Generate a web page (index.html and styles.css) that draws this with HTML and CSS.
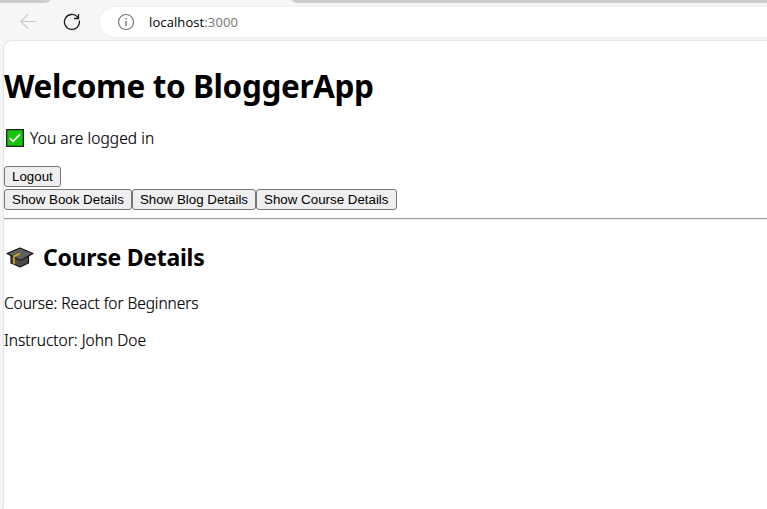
FILE: index.html
```html
<!DOCTYPE html>
<html lang="en">
<head>
<meta charset="utf-8">
<title>BloggerApp</title>
<link rel="stylesheet" href="styles.css">
</head>
<body>
<div class="tabs"><div class="tab tab-left"></div><div class="tab tab-right"></div></div>
<div class="toolbar">
  <svg class="back" width="18" height="16" viewBox="0 0 18 16" fill="none" stroke="#c8c8c8" stroke-width="1.1"><path d="M8 .500.500 7.500 8 14.500M.5 7.500h15.500"/></svg>
  <svg class="reload" width="18" height="18" viewBox="0 0 18 18" fill="none" stroke="#1b1b1b" stroke-width="1.3"><path d="M16.300 7.500A7.500 7.500 0 1 1 14.500 3.900L15.500 5M15.500 1v4.500H11"/></svg>
  <div class="address">
    <svg width="18" height="18" viewBox="0 0 18 18" fill="none" stroke="#777" stroke-width="1.200"><circle cx="9" cy="9" r="7.500"/><path d="M9 8v5M9 5v1.500" stroke-width="1.400"/></svg>
    <span class="url">localhost<span class="port">:3000</span></span>
  </div>
</div>
<main class="page">
  <h1>Welcome to BloggerApp</h1>
  <p class="status">
    <svg width="18" height="18" viewBox="0 0 18 18"><path fill="#16c60c" stroke="#222" stroke-width="1.300" d="M.65.65h16.700v16.700H.65z"/><path d="m4 9.300 3 3 7-7" fill="none" stroke="#fff" stroke-width="1.700"/></svg>
    <span>You are logged in</span>
  </p>
  <div class="row"><button>Logout</button></div>
  <div class="row details"><button>Show Book Details</button><button>Show Blog Details</button><button>Show Course Details</button></div>
  <hr>
  <h2>
    <svg width="28" height="21" viewBox="0 0 28 21" stroke="#151515" stroke-width="1.200" stroke-linejoin="round"><path fill="#4b4b4b" d="M5 8v8l9 4 8.500-4V8z"/><path fill="#606060" d="M1 6.500 14 1l13 5.500-12.500 7z"/><path d="m14 6.500-6 3v8" fill="none" stroke="#e3a21a" stroke-width="1.600"/></svg>
    <span>Course Details</span>
  </h2>
  <p class="course">Course: React for Beginners</p>
  <p class="teacher">Instructor: John Doe</p>
</main>
</body>
</html>
```

FILE: styles.css
```css
* { box-sizing: border-box; }
body {
  margin: 0;
  height: 509px;
  overflow: hidden;
  display: flex;
  flex-direction: column;
  background: #f6f6f6;
  color: #000;
  font-family: "Segoe UI", "Noto Sans", sans-serif;
}
svg { display: block; flex: none; }
.tabs { display: flex; justify-content: space-between; height: 3px; flex: none; }
.tab { background: #ccc; }
.tab-left { width: 50px; border-bottom-right-radius: 6px 3px; }
.tab-right { width: 475px; border-bottom-left-radius: 6px 3px; }
.toolbar { display: flex; align-items: center; height: 37px; flex: none; padding-left: 20px; }
.back { margin-right: 25px; }
.reload { margin-right: 19px; }
.address {
  flex: 1;
  display: flex;
  align-items: center;
  height: 30px;
  margin-top: 1px;
  padding-left: 17px;
  background: #fff;
  border-radius: 15px 0 0 15px;
  box-shadow: 0 0 2px rgba(0, 0, 0, .1);
}
.url { margin-left: 14px; font-family: "Segoe UI", "Open Sans", sans-serif; font-size: 13px; line-height: 18px; letter-spacing: .1px; white-space: nowrap; }
.port { color: #767676; }
.page {
  flex: 1;
  margin: 1px 0 0 4px;
  background: #fff;
  border-top-left-radius: 8px;
  box-shadow: 0 0 2px rgba(0, 0, 0, .25);
}
h1, h2, p { margin: 0; white-space: nowrap; }
h1 { padding-top: 23px; font-size: 31.500px; line-height: 43px; font-weight: 700; letter-spacing: -.38px; }
.status { display: flex; align-items: center; height: 21px; margin-top: 20px; padding-left: 2px; gap: 6px; letter-spacing: .1px; }
.status span { position: relative; top: 1px; }
p { font-size: 15.500px; line-height: 21px; font-weight: 300; -webkit-text-stroke: .2px #000; }
.row { display: flex; height: 21px; margin-top: 2px; }
.status + .row { margin-top: 18px; }
button {
  height: 21px;
  margin: 0;
  padding: 0 7px;
  border: 1px solid #767676;
  border-radius: 3px;
  background: #efefef;
  color: #000;
  font: 13.333px "Liberation Sans", Arial, sans-serif;
}
hr { margin: 8px 0 0; border: 0; height: 2px; border-top: 1px solid #9a9a9a; border-bottom: 1px solid #eee; }
h2 { display: flex; align-items: center; height: 32px; margin-top: 21px; padding-left: 2px; gap: 9px; font-size: 23px; line-height: 32px; letter-spacing: -.27px; }
.course { margin-top: 20px; letter-spacing: -.07px; }
.teacher { margin-top: 16px; }
```
